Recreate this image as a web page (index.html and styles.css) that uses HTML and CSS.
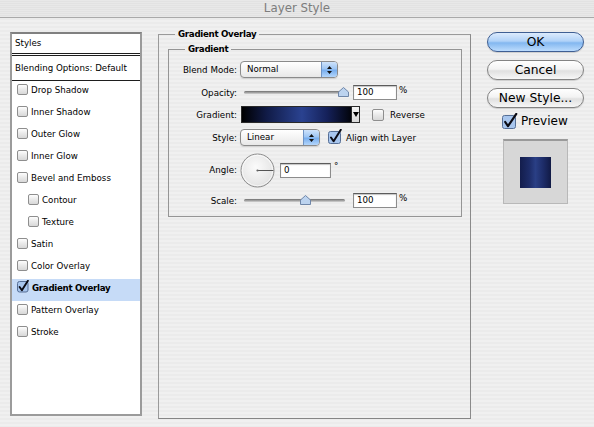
FILE: index.html
```html
<!DOCTYPE html>
<html>
<head>
<meta charset="utf-8">
<title>Layer Style</title>
<link rel="stylesheet" href="styles.css">
</head>
<body>
<div class="titlebar">Layer Style</div>
<div class="main">
  <div class="stylelist">
    <div class="hdr hdr-styles">Styles</div>
    <div class="hdr hdr-blend">Blending Options: Default</div>
    <div class="item"><span class="cb"></span>Drop Shadow</div>
    <div class="item"><span class="cb"></span>Inner Shadow</div>
    <div class="item"><span class="cb"></span>Outer Glow</div>
    <div class="item"><span class="cb"></span>Inner Glow</div>
    <div class="item"><span class="cb"></span>Bevel and Emboss</div>
    <div class="item sub"><span class="cb"></span>Contour</div>
    <div class="item sub"><span class="cb"></span>Texture</div>
    <div class="item"><span class="cb"></span>Satin</div>
    <div class="item"><span class="cb"></span>Color Overlay</div>
    <div class="item sel"><svg class="cbc" width="12" height="13" viewBox="0 0 12 13"><rect x="0.5" y="1.5" width="10.5" height="10.5" rx="2" fill="#a8c6ee" stroke="#566f96"/><path d="M2.6 7 L4.9 10.3 L10.9 0.8" fill="none" stroke="#0b0b14" stroke-width="1.9" stroke-linecap="round" stroke-linejoin="round"/></svg>Gradient Overlay</div>
    <div class="item"><span class="cb"></span>Pattern Overlay</div>
    <div class="item"><span class="cb"></span>Stroke</div>
  </div>

  <div class="group outer">
    <div class="legend">Gradient Overlay</div>
    <div class="group inner">
      <div class="legend">Gradient</div>

      <div class="row r1">
        <span class="lbl">Blend Mode:</span>
        <div class="popup pw-blend"><span class="val">Normal</span><span class="arrows"><svg width="7" height="10" viewBox="0 0 7 10"><path d="M1 4 L3.5 1 L6 4 Z M1 6 L3.5 9 L6 6 Z" fill="#111"/></svg></span></div>
      </div>

      <div class="row r2">
        <span class="lbl">Opacity:</span>
        <div class="slider"><div class="track"><svg class="thumb" style="left:99%" width="11" height="10" viewBox="0 0 11 10"><path d="M0.5 9.5 V5 L5.5 0.5 L10.5 5 V9.5 Z" fill="#bcd3ef" stroke="#6f86a8"/></svg></div></div>
        <span class="num">100</span><span class="unit">%</span>
      </div>

      <div class="row r3">
        <span class="lbl">Gradient:</span>
        <div class="gradbar"><span class="gfill"></span><span class="gdrop"><svg width="6" height="5" viewBox="0 0 6 5"><path d="M0 0 H6 L3 5 Z" fill="#000"/></svg></span></div>
        <span class="cb cb-rev"></span><span class="txt">Reverse</span>
      </div>

      <div class="row r4">
        <span class="lbl">Style:</span>
        <div class="popup pw-style"><span class="val">Linear</span><span class="arrows"><svg width="7" height="10" viewBox="0 0 7 10"><path d="M1 4 L3.5 1 L6 4 Z M1 6 L3.5 9 L6 6 Z" fill="#111"/></svg></span></div>
        <svg class="cbc cb-align" width="14" height="15" viewBox="0 0 14 15"><rect x="0.5" y="2.5" width="12" height="12" rx="2" fill="#a8c6ee" stroke="#566f96"/><path d="M3 8.5 L5.6 12.3 L12.8 0.8" fill="none" stroke="#0b0b14" stroke-width="2" stroke-linecap="round" stroke-linejoin="round"/></svg>
        <span class="txt">Align with Layer</span>
      </div>

      <div class="row r5">
        <span class="lbl">Angle:</span>
        <svg class="dial" width="35" height="35" viewBox="0 0 35 35">
          <defs><radialGradient id="dg" cx="0.45" cy="0.4" r="0.65"><stop offset="0" stop-color="#fbfbfb"/><stop offset="0.8" stop-color="#e6e6e6"/><stop offset="1" stop-color="#cfcfcf"/></radialGradient></defs>
          <circle cx="17.5" cy="17.5" r="16.5" fill="url(#dg)" stroke="#8c8c8c"/>
          <circle cx="17.5" cy="17.5" r="15.3" fill="none" stroke="#ffffff" stroke-opacity="0.7"/>
          <line x1="17.5" y1="17.5" x2="33.5" y2="17.5" stroke="#555" stroke-width="1"/>
          <circle cx="17.5" cy="17.5" r="1.1" fill="#666"/>
        </svg>
        <span class="num num-angle">0</span><span class="unit deg">°</span>
      </div>

      <div class="row r6">
        <span class="lbl">Scale:</span>
        <div class="slider"><div class="track"><svg class="thumb" style="left:61%" width="11" height="10" viewBox="0 0 11 10"><path d="M0.5 9.5 V5 L5.5 0.5 L10.5 5 V9.5 Z" fill="#bcd3ef" stroke="#6f86a8"/></svg></div></div>
        <span class="num">100</span><span class="unit">%</span>
      </div>
    </div>
  </div>

  <div class="side">
    <div class="btn default">OK</div>
    <div class="btn">Cancel</div>
    <div class="btn">New Style...</div>
    <div class="preview-row">
      <svg class="cbc" width="16" height="16" viewBox="0 0 16 16"><rect x="0.5" y="2.5" width="13" height="13" rx="2" fill="#a8c6ee" stroke="#566f96"/><path d="M3.2 9 L6 13.2 L14.3 0.9" fill="none" stroke="#0b0b14" stroke-width="2.2" stroke-linecap="round" stroke-linejoin="round"/></svg>
      <span>Preview</span>
    </div>
    <div class="preview-box"><div class="swatch"></div></div>
  </div>
</div>
</body>
</html>
```

FILE: styles.css
```css
* { box-sizing: border-box; }

html, body { margin: 0; padding: 0; }

body {
  width: 594px;
  height: 427px;
  overflow: hidden;
  font-family: "DejaVu Sans", "Noto Sans", sans-serif;
  font-size: 8.7px;
  color: #000;
  background: repeating-linear-gradient(to bottom, #f0f0f0 0, #f0f0f0 2px, #ebebeb 2px, #ebebeb 4px) fixed;
}

.titlebar {
  height: 18px;
  border-bottom: 1px solid #a9a9a9;
  text-align: center;
  font-size: 11.8px;
  line-height: 17px;
  color: #7d7d7d;
  background: repeating-linear-gradient(to bottom, #e8e8e8 0, #e8e8e8 1px, #e2e2e2 1px, #e2e2e2 2px);
}

.main {
  display: flex;
  align-items: flex-start;
  padding: 14px 0 0 10px;
}

/* ---------- left list ---------- */
.stylelist {
  width: 132px;
  height: 384px;
  flex: none;
  background: #fff;
  border: 2px solid #9b9b9b;
  border-top-color: #808080;
}

.hdr { padding-left: 3px; }

.hdr-styles {
  height: 22px;
  line-height: 19px;
  border-bottom: 3px double #1e1e1e;
}

.hdr-blend {
  height: 25px;
  line-height: 24px;
  border-bottom: 1px solid #1e1e1e;
}

.item {
  height: 22px;
  display: flex;
  align-items: center;
  gap: 3px;
  padding: 0 0 5px 5px;
  white-space: nowrap;
}

.item.sub { padding-left: 16px; }

.item.sel {
  background: #c6dbf7;
  font-weight: bold;
  letter-spacing: -0.3px;
}

.cb {
  width: 11px;
  height: 11px;
  flex: none;
  border: 1px solid #8e8e8e;
  border-radius: 2px;
  background: linear-gradient(#fdfdfd, #e9e9e9 50%, #d8d8d8);
}

.cbc { flex: none; display: block; }
.item.sel .cbc { margin-top: -2px; }

/* ---------- group boxes ---------- */
.group {
  border: 1px solid #959595;
}

.outer {
  flex: none;
  width: 313px;
  height: 385px;
  margin: 2px 0 0 16px;
  border-color: #9a9a9a #8a8a8a #858585 #9a9a9a;
}

.legend {
  width: max-content;
  margin: -7px 0 0 16px;
  padding: 0 3px;
  line-height: 12px;
  font-weight: bold;
  letter-spacing: -0.3px;
  background: repeating-linear-gradient(to bottom, #f0f0f0 0, #f0f0f0 2px, #ebebeb 2px, #ebebeb 4px) fixed;
}

.inner {
  margin: 9px 8px 0 9px;
  padding-bottom: 8px;
}

/* ---------- rows ---------- */
.row {
  display: flex;
  align-items: center;
  white-space: nowrap;
}

.r1 { height: 17px; margin-top: 6px; }
.r2 { height: 15px; margin-top: 7px; }
.r3 { height: 17px; margin-top: 6px; }
.r4 { height: 17px; margin-top: 6px; }
.r5 { height: 34px; margin-top: 7px; }
.r6 { height: 15px; margin-top: 6px; }

.lbl {
  width: 68px;
  flex: none;
  margin-right: 3px;
  text-align: right;
}

.popup {
  height: 17px;
  display: flex;
  border: 1px solid #8b8b8b;
  border-radius: 4px;
  background: linear-gradient(#ffffff, #f4f4f4 50%, #e8e8e8);
  box-shadow: 0 1px 1px rgba(0, 0, 0, 0.12);
}

.pw-blend { width: 98px; }
.pw-style { width: 80px; }

.popup .val {
  flex: 1;
  padding-left: 6px;
  line-height: 15px;
}

.arrows {
  width: 16px;
  flex: none;
  display: flex;
  align-items: center;
  justify-content: center;
  border-left: 1px solid #6f93c4;
  border-radius: 0 3px 3px 0;
  background: linear-gradient(#cfe3fb, #9ec6f4 45%, #78aeee 55%, #b4d6fb);
}

.slider {
  width: 113px;
  flex: none;
  padding-left: 4px;
  padding-right: 8px;
}

.track {
  position: relative;
  height: 3px;
  border-radius: 2px;
  background: linear-gradient(#6f6f6f, #a9a9a9 60%, #d6d6d6);
}

.thumb {
  position: absolute;
  top: -4px;
  margin-left: -5.5px;
}

.num {
  width: 44px;
  height: 15px;
  flex: none;
  padding-left: 3px;
  line-height: 13px;
  background: #fff;
  border: 1px solid #8c8c8c;
  border-top-color: #5c5c5c;
  box-shadow: inset 0 1px 1px #c4c4c4;
}

.unit {
  align-self: flex-start;
  margin-left: 2px;
  line-height: 10px;
}

.gradbar {
  width: 119px;
  height: 17px;
  flex: none;
  margin-left: 1px;
  display: flex;
  border: 1px solid #2a2a2a;
}

.gfill {
  flex: 1;
  background: linear-gradient(90deg, #000 0%, #101a45 22%, #22367a 45%, #2a4290 55%, #15215a 78%, #02040c 100%);
}

.gdrop {
  width: 8px;
  flex: none;
  display: flex;
  align-items: center;
  justify-content: center;
  border-left: 1px solid #2a2a2a;
  background: linear-gradient(#f4f4f4, #d9d9d9);
}

.cb-rev {
  width: 12px;
  height: 12px;
  margin-left: 12px;
}

.txt { margin-left: 6px; }

.cb-align { margin-left: 8px; margin-top: -3px; }
.r4 .txt { margin-left: 4px; }

.dial {
  flex: none;
  display: block;
  margin-left: 0;
}

.num-angle {
  width: 51px;
  margin-left: 5px;
}

.deg {
  margin-top: 8px;
  margin-left: 3px;
}

/* ---------- right column ---------- */
.side {
  width: 97px;
  flex: none;
  margin-left: 16px;
  display: flex;
  flex-direction: column;
  gap: 8px;
}

.btn {
  height: 20px;
  border-radius: 10px;
  border: 1px solid #838383;
  background: linear-gradient(#ffffff 0%, #f3f3f3 45%, #e0e0e0 55%, #f7f7f7 100%);
  box-shadow: 0 1px 1px rgba(0, 0, 0, 0.15);
  font-size: 12.3px;
  line-height: 18px;
  text-align: center;
}

.btn.default {
  border-color: #3f5f93;
  background: linear-gradient(#dcebfd 0%, #b0d2f8 45%, #83b7f0 55%, #bcdcfd 100%);
}

.preview-row {
  display: flex;
  align-items: center;
  margin: -3px 0 0 15px;
  font-size: 12px;
  line-height: 16px;
}

.preview-row span { margin-left: 3px; }

.preview-box {
  width: 65px;
  height: 65px;
  margin: 2px 0 0 16px;
  display: flex;
  align-items: center;
  justify-content: center;
  background: #d7d7d7;
  border: 1px solid #b8b8b8;
  border-top: 2px solid #9a9a9a;
}

.swatch {
  width: 31px;
  height: 31px;
  background: linear-gradient(90deg, #131d4c 0%, #1d2c68 30%, #2a3f85 50%, #1d2c68 75%, #111a45 100%);
}
```
